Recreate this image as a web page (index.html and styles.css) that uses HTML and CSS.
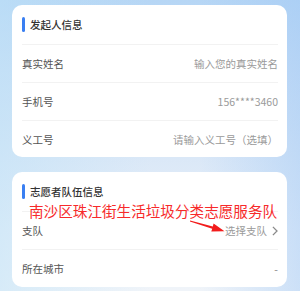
FILE: index.html
```html
<!DOCTYPE html>
<html lang="zh-CN">
<head>
<meta charset="utf-8">
<link rel="stylesheet" href="styles.css">
</head>
<body>
<div class="page">
  <section class="card">
    <div class="card-title"><span class="bar"></span>发起人信息</div>
    <div class="row"><span class="label">真实姓名</span><span class="value">输入您的真实姓名</span></div>
    <div class="row"><span class="label">手机号</span><span class="value">156****3460</span></div>
    <div class="row last"><span class="label">义工号</span><span class="value">请输入义工号（选填）</span></div>
  </section>
  <section class="card card2">
    <div class="card-title"><span class="bar"></span>志愿者队伍信息</div>
    <div class="row"><span class="label">支队</span><span class="value">选择支队<svg class="chev" width="6" height="10" viewBox="0 0 6 10"><path d="M0.9 0.9 L5 5 L0.9 9.1" fill="none" stroke="#8a8a8a" stroke-width="1.3"/></svg></span></div>
    <div class="row last"><span class="label">所在城市</span><span class="value dash">-</span></div>
  </section>
</div>
<div class="note">南沙区珠江街生活垃圾分类志愿服务队</div>
<svg class="arrow" width="300" height="291" viewBox="0 0 300 291"><polygon points="190.1,220.6 212.8,226.5 213.6,223.6 224.5,231.2 211.3,231.6 212.2,228.8 189.9,221.4" fill="#f21c1c"/></svg>
</body>
</html>
```
FILE: styles.css
```css
html, body {
  margin: 0;
  padding: 0;
}
body {
  width: 300px;
  height: 291px;
  overflow: hidden;
  position: relative;
  font-family: "Noto Sans CJK SC", "Noto Sans", sans-serif;
  background:
    linear-gradient(90deg, rgba(190, 226, 247, 0.5) 0px, rgba(190, 226, 247, 0) 150px, rgba(160, 200, 245, 0) 200px, rgba(160, 200, 245, 0.45) 300px),
    linear-gradient(180deg, #b6d6f5 0px, #c8def6 70px, #d9e7f7 150px, #e9f0f9 230px, #f0f4f9 291px);
}
.page {
  padding: 5px 13px 0 12px;
  display: flex;
  flex-direction: column;
  gap: 15px;
}
.card {
  background: #ffffff;
  border-radius: 10px;
  padding: 0 9px 0 10px;
}
.card-title {
  height: 39px;
  display: flex;
  align-items: center;
  font-size: 10.5px;
  font-weight: 500;
  color: #333333;
  border-bottom: 1px solid #f2f2f2;
}
.bar {
  width: 2.5px;
  height: 15px;
  background: #3a7ff2;
  border-radius: 1.5px;
  margin-right: 5.5px;
}
.row {
  height: 37px;
  display: flex;
  align-items: center;
  justify-content: space-between;
  border-bottom: 1px solid #f2f2f2;
  font-size: 10.5px;
}
.row.last {
  border-bottom: none;
  height: 36px;
}
.card2 .row.last {
  height: 37px;
}
.label {
  color: #555555;
}
.value {
  color: #9a9a9a;
  display: flex;
  align-items: center;
}
.chev {
  margin-left: 5px;
}
.dash {
  color: #888888;
}
.note {
  position: absolute;
  left: 29px;
  top: 201px;
  font-size: 14.6px;
  line-height: 20px;
  color: #f72a2a;
  white-space: nowrap;
}
.arrow {
  position: absolute;
  left: 0;
  top: 0;
}
```
